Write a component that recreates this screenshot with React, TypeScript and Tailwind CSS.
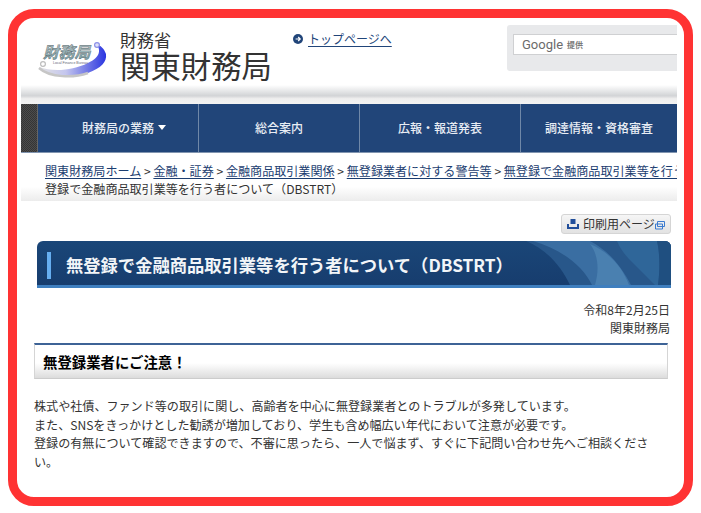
const jp = "font-['Noto_Sans_CJK_JP','Noto_Sans',sans-serif]";

function Logo() {
  return (
    <svg width="72" height="40" viewBox="0 0 72 40" className="shrink-0">
      <defs>
        <linearGradient id="sw" x1="0" x2="1" y1="0" y2="0">
          <stop offset="0" stopColor="#e2e2e2" />
          <stop offset="0.4" stopColor="#c4c6ee" />
          <stop offset="1" stopColor="#2a35e0" />
        </linearGradient>
        <linearGradient id="tx" x1="0" x2="0" y1="0" y2="1">
          <stop offset="0" stopColor="#c3cccf" />
          <stop offset="1" stopColor="#6f9ea4" />
        </linearGradient>
      </defs>
      <path d="M1 27 C6 37 30 39 50 33 C63 28 69 22 68 14 C66 8 62 5 58 4 C63 9 63 17 50 23 C34 31 14 32 1 27Z" fill="url(#sw)" />
      <path d="M1 28 C12 38 36 38 50 33" fill="none" stroke="#c6c6c6" strokeWidth="2.4" />
      <circle cx="59" cy="5" r="2.4" fill="#dfe0f8" stroke="#8a8fe8" strokeWidth="1.2" />
      <circle cx="5" cy="24" r="2.4" fill="#fff" stroke="#bdbdbd" strokeWidth="1.2" />
      <text x="5" y="18" fontFamily="'Noto Sans CJK JP',sans-serif" fontWeight="700" fontStyle="italic" fontSize="15.8" fill="url(#tx)" stroke="#5d6a6e" strokeWidth="0.45">財務局</text>
      <text x="15" y="24" fontFamily="'Liberation Sans',sans-serif" fontSize="3.6" fill="#667">Local Finance Bureau</text>
    </svg>
  );
}

function NavCell({ label, caret, last }: { label: string; caret?: boolean; last?: boolean }) {
  return (
    <div className={`flex shrink-0 items-center justify-center text-[12px] font-medium text-[#e8edf4] ${last ? "w-[156px]" : "w-[161px] border-r border-[#7088a8]"}`}>
      <span className="relative">
        {label}
        {caret && <span className="absolute left-[calc(100%+4px)] top-[6px] h-0 w-0 border-x-[4.5px] border-t-[5px] border-x-transparent border-t-white" />}
      </span>
    </div>
  );
}

function Crumb({ children }: { children: string }) {
  return <a className="text-[#1b3d70] underline underline-offset-2">{children}</a>;
}

export default function App() {
  return (
    <div className={`h-[513px] w-[701px] bg-white pl-2 pt-[9px] ${jp}`}>
      <div className="h-[497px] w-[685px] overflow-hidden rounded-[26px] border-[9px] border-[#ff3333] bg-white pl-1 pr-[7px]">
        <header className="flex h-[67px] items-start">
          <div className="ml-[17px] mt-[22px]"><Logo /></div>
          <div className="ml-[10px] mt-[11px] text-[#333]">
            <div className="text-[17px] leading-[22px]">財務省</div>
            <div className="w-[152px] text-[30.4px] leading-[28px]">関東財務局</div>
          </div>
          <div className="ml-[21px] mt-[12px] flex items-center gap-[5px] text-[12px] leading-[18px] text-[#214579]">
            <svg width="10" height="10" viewBox="0 0 10 10">
              <circle cx="5" cy="5" r="5" fill="#214579" />
              <path d="M2.6 5H7M5.2 3l2 2-2 2" fill="none" stroke="#fff" strokeWidth="1.2" />
            </svg>
            <span className="underline underline-offset-2">トップページへ</span>
          </div>
          <div className="ml-auto mt-[7px] h-[46px] w-[170px] rounded-l-[3px] bg-[#e8e9eb] pl-[6px] pt-[9px]">
            <div className="flex h-[21px] items-center gap-[4px] border-y border-l border-[#cfd0d2] bg-white pl-2">
              <span className="font-['Roboto',sans-serif] text-[13px] text-[#6b6b6b]">Google</span>
              <span className="text-[8px] font-bold text-[#7a7a7a]">提供</span>
            </div>
          </div>
        </header>

        <div className="h-[19px] bg-[linear-gradient(#ffffff_0%,#d3d5d7_55%,#d8d9db_60%,#eeeeee_72%,#f3f3f3_100%)]" />

        <nav className="flex h-[49px] border-b border-[#8195b0] bg-[#214579]">
          <div className="w-[17px] shrink-0 border-r border-[#666] bg-[conic-gradient(#353535_25%,#4c4c4c_0_50%,#353535_0_75%,#4c4c4c_0)] bg-[length:2px_2px]" />
          <NavCell label="財務局の業務" caret />
          <NavCell label="総合案内" />
          <NavCell label="広報・報道発表" />
          <NavCell label="調達情報・資格審査" last />
        </nav>

        <div className="h-[48px] bg-[linear-gradient(#ffffff_70%,#ececec_100%)] pl-6 pt-[9px] text-[12.08px] leading-[18px] text-[#333]">
          <div className="overflow-hidden whitespace-nowrap">
            <Crumb>関東財務局ホーム</Crumb> &gt; <Crumb>金融・証券</Crumb> &gt; <Crumb>金融商品取引業関係</Crumb> &gt; <Crumb>無登録業者に対する警告等</Crumb> &gt; <Crumb>無登録で金融商品取引業等を行う者について</Crumb>
          </div>
          <div>登録で金融商品取引業等を行う者について（DBSTRT）</div>
        </div>

        <div className="mr-[6px] mt-[13px] flex justify-end">
          <div className="flex h-[20px] w-[110px] items-center rounded-[3px] border border-[#d5d5d5] bg-[linear-gradient(#f6f6f6,#e2e2e2)] pl-[5px] text-[12px] text-[#333]">
            <svg width="12" height="10" viewBox="0 0 12 10" className="mr-[4px]">
              <path d="M3.5 0h5v5h-5zM0 5h2v3h8V5h2v5H0z" fill="#214e9a" />
            </svg>
            <span>印刷用ページ</span>
            <svg width="10" height="9" viewBox="0 0 10 9" className="mt-[2px]">
              <path d="M2.5 .5h7v5h-7zM.5 3h7v5h-7z" fill="none" stroke="#3b7bd0" />
            </svg>
          </div>
        </div>

        <h1 className="relative ml-4 mr-[6px] mt-[7px] flex h-[47px] items-center overflow-hidden rounded-t-[6px] border-b-[3px] border-[#3f7fbf] bg-[linear-gradient(#1a4678,#173d6e)] text-[17.3px] font-bold text-[#f2f5f8]">
          <span className="ml-[10px] mt-[4px] h-[27px] w-1 bg-[#66aef0]" />
          <span className="ml-[15px] mt-[4px]">無登録で金融商品取引業等を行う者について（DBSTRT）</span>
          <svg className="absolute right-0 top-0" width="150" height="44" viewBox="0 0 150 44">
            <path d="M5 0C25 8 40 25 49 44H150V0Z" fill="#28578a" />
            <path d="M12 0C40 8 62 25 71 44H110C100 25 88 10 69 0Z" fill="#3a6ea2" />
            <path d="M69 3C78 15 78 30 74 44H108C102 28 90 12 69 3Z" fill="#4a80b0" />
            <path d="M96 0C100 10 106 16 112 22C120 30 128 38 134 44H137C139 30 139 12 136 0Z" fill="#2f6699" />
            <path d="M136 0C139 12 139 30 137 44H150V0Z" fill="#1f4f80" />
          </svg>
        </h1>

        <div className="mr-[7px] mt-[13px] text-right text-[12px] leading-[18px] text-[#333]">
          <div>令和8年2月25日</div>
          <div>関東財務局</div>
        </div>

        <h2 className="ml-[13px] mr-[9px] mt-[6px] flex h-[36px] items-center border-x border-b border-t-2 border-x-[#d5d5d5] border-b-[#cccccc] border-t-[#3d6396] bg-[linear-gradient(#ffffff_55%,#dcdcdc_100%)] pl-2 text-[14.4px] font-bold text-black">
          無登録業者にご注意！
        </h2>

        <p className="ml-[13px] mr-[9px] mt-[18px] text-[12.08px] leading-[18.5px] text-[#333]">
          株式や社債、ファンド等の取引に関し、高齢者を中心に無登録業者とのトラブルが多発しています。<br />
          また、SNSをきっかけとした勧誘が増加しており、学生も含め幅広い年代において注意が必要です。<br />
          登録の有無について確認できますので、不審に思ったら、一人で悩まず、すぐに下記問い合わせ先へご相談ください。
        </p>
      </div>
    </div>
  );
}
